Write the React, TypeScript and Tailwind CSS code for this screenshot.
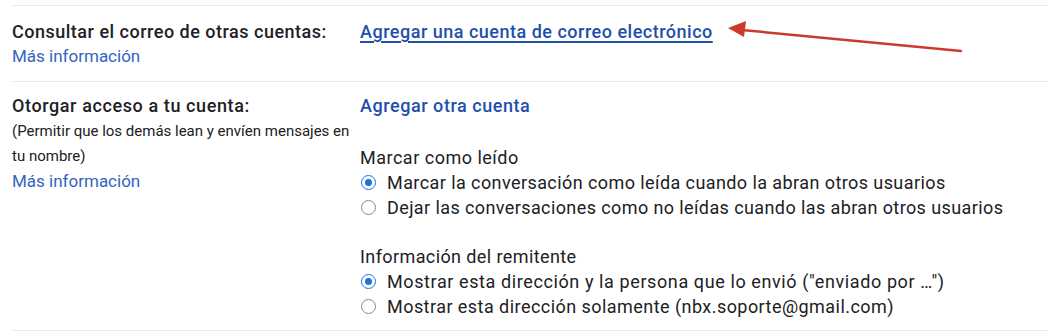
import React from "react";

function Radio({ checked }: { checked?: boolean }) {
  return checked ? (
    <span className="w-[15px] h-[15px] rounded-full border-[1.5px] border-[#1a73e8] flex items-center justify-center shrink-0">
      <span className="w-[7px] h-[7px] rounded-full bg-[#1a73e8]" />
    </span>
  ) : (
    <span className="w-[15px] h-[15px] rounded-full border-[1.5px] border-[#8a8a8a] shrink-0" />
  );
}

function RadioRow({ checked, label, track }: { checked?: boolean; label: string; track: string }) {
  return (
    <div className="flex items-center gap-[11px] h-[25px] pl-[1px]">
      <Radio checked={checked} />
      <span className={"text-[18px] text-[#202124] " + track}>{label}</span>
    </div>
  );
}

export default function App() {
  return (
    <div
      className="relative w-[1048px] h-[332px] bg-white pl-[12px] pt-[5px] overflow-hidden"
      style={{ fontFamily: "Roboto, 'Noto Sans', sans-serif" }}
    >
      <div className="border-t border-[#ebebeb]">
        <div className="grid grid-cols-[348px_1fr] pt-[13px] pb-[12px] leading-[25px]">
          <div>
            <div className="text-[18px] tracking-[0.5px] font-medium text-[#202124]">Consultar el correo de otras cuentas:</div>
            <div className="text-[17px] text-[#3165c0]">Más información</div>
          </div>
          <div>
            <div className="text-[18px] tracking-[0.5px] font-medium text-[#1f4fad] underline underline-offset-[3px] decoration-[1.5px]">
              Agregar una cuenta de correo electrónico
            </div>
          </div>
        </div>
      </div>
      <div className="border-t border-b border-[#ebebeb]">
        <div className="grid grid-cols-[348px_1fr] pt-[11px] pb-[11px] leading-[25px]">
          <div>
            <div className="text-[18px] tracking-[0.6px] font-medium text-[#202124]">Otorgar acceso a tu cuenta:</div>
            <div className="text-[15px] text-[#202124] w-[345px] leading-[25px] mt-[1px]">
              (Permitir que los demás lean y envíen mensajes en tu nombre)
            </div>
            <div className="text-[17px] text-[#3165c0]">Más información</div>
          </div>
          <div>
            <div className="text-[18px] tracking-[0.55px] font-medium text-[#1f4fad]">Agregar otra cuenta</div>
            <div className="mt-[27px] text-[18px] tracking-[0.5px] text-[#202124]">Marcar como leído</div>
            <RadioRow checked track="tracking-[0.42px]" label="Marcar la conversación como leída cuando la abran otros usuarios" />
            <RadioRow track="tracking-[0.4px]" label="Dejar las conversaciones como no leídas cuando las abran otros usuarios" />
            <div className="mt-[24px] text-[18px] tracking-[0.4px] text-[#202124]">Información del remitente</div>
            <RadioRow checked track="tracking-[0.6px]" label='Mostrar esta dirección y la persona que lo envió ("enviado por …")' />
            <RadioRow track="tracking-[0.45px]" label="Mostrar esta dirección solamente (nbx.soporte@gmail.com)" />
          </div>
        </div>
      </div>
      <svg className="absolute left-0 top-0 pointer-events-none" width="1048" height="332">
        <line x1="961" y1="51" x2="742" y2="30" stroke="#cc3a2e" strokeWidth="2.5" strokeLinecap="round" />
        <polygon points="728,28 746,21 744,37" fill="#cc3a2e" />
      </svg>
    </div>
  );
}
